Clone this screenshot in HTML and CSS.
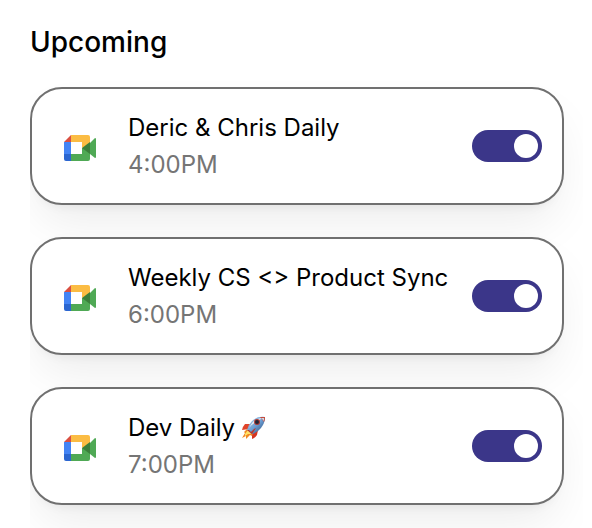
FILE: index.html
```html
<!DOCTYPE html>
<html lang="en">
<head>
<meta charset="utf-8">
<meta name="viewport" content="width=device-width, initial-scale=1">
<title>Upcoming</title>
<link rel="stylesheet" href="styles.css">
</head>
<body>
<svg class="sprite" aria-hidden="true">
  <symbol id="meet" viewBox="0 0 32 26">
    <path fill="#fbbc43" d="M7 0H24Q26 0 26 2V9L18 13V7H7Z"/>
    <path fill="#d94f41" d="M7 0V7H0Z"/>
    <path fill="#4384f5" d="M0 7H7V19H0Z"/>
    <path fill="#2b66d0" d="M0 19H7V26H2Q0 26 0 24Z"/>
    <path fill="#4fa955" d="M7 19H18V13H26V24Q26 26 24 26H7Z"/>
    <path fill="#4fa955" d="M26 8L31 3Q32 3 32 4V22Q32 23 31 23L26 19Z"/>
    <path fill="#3a7f3b" d="M26 7V19L18 13Z"/>
  </symbol>
</svg>
<main class="page">
  <h1 class="heading">Upcoming</h1>
  <ul class="meetings">
    <li class="card">
      <svg class="logo" role="img" aria-label="Google Meet"><use href="#meet"/></svg>
      <div class="details">
        <label class="title" for="m1">Deric &amp; Chris Daily</label>
        <time class="time" datetime="16:00">4:00PM</time>
      </div>
      <input class="toggle" type="checkbox" role="switch" id="m1" checked>
    </li>
    <li class="card">
      <svg class="logo" role="img" aria-label="Google Meet"><use href="#meet"/></svg>
      <div class="details">
        <label class="title" for="m2">Weekly CS &lt;&gt; Product Sync</label>
        <time class="time" datetime="18:00">6:00PM</time>
      </div>
      <input class="toggle" type="checkbox" role="switch" id="m2" checked>
    </li>
    <li class="card">
      <svg class="logo" role="img" aria-label="Google Meet"><use href="#meet"/></svg>
      <div class="details">
        <label class="title" for="m3">Dev Daily
          <svg class="rocket" viewBox="0 0 24 24" role="img" aria-label="rocket">
            <defs>
              <linearGradient id="hull" x1="0" y1="0" x2="1" y2="1">
                <stop offset="0" stop-color="#b9d5ee"/>
                <stop offset=".5" stop-color="#6d9fd4"/>
                <stop offset="1" stop-color="#24436f"/>
              </linearGradient>
            </defs>
            <path fill="#e0442a" d="M9 8L3 8Q1 10 0 14L7 13Z"/>
            <path fill="#d63421" d="M16 14L15 19Q13 22 10 23L10 17Z"/>
            <path fill="#f08a24" d="M5 13L2 16L3 17L0 22L4 20L4 23L8 19L10 20L11 17Z"/>
            <path fill="#ffe36a" d="M6 14L3 18L3 20L6 18L9 18Z"/>
            <path fill="url(#hull)" d="M23 1Q15 0 10 5Q6 9 5 14L10 18Q15 17 19 12Q23 7 23 1Z"/>
            <path fill="#e4edf4" d="M21 2Q14 2 10 7L7 12Q12 6 21 2Z"/>
            <path fill="#c94a3a" d="M23 1L18 1L22 6Q23 4 23 1Z"/>
            <path fill="#c5d7e8" d="M22 2L19 2L22 5Z"/>
            <path fill="#bd3429" d="M5 14L10 18L14 12L12 13L9 16L7 14Z"/>
            <circle cx="15" cy="6" r="3" fill="#b43a31"/>
            <circle cx="15" cy="6" r="2" fill="#20283a"/>
          </svg>
        </label>
        <time class="time" datetime="19:00">7:00PM</time>
      </div>
      <input class="toggle" type="checkbox" role="switch" id="m3" checked>
    </li>
  </ul>
</main>
</body>
</html>
```
FILE: styles.css
```css
* {
  box-sizing: border-box;
}

body {
  margin: 0;
  background: #fff;
  color: #000;
  font-family: Inter, "Liberation Sans", sans-serif;
}

.sprite {
  position: absolute;
  width: 0;
  height: 0;
}

.page {
  padding: 24px 9px 0 30px;
}

.heading {
  margin: 0;
  font-size: 28px;
  line-height: 36px;
  font-weight: 500;
}

.meetings {
  display: flex;
  flex-direction: column;
  gap: 32px;
  margin: 0;
  padding: 27px 19px 23px 0;
  list-style: none;
  overflow: hidden;
}

.card {
  display: flex;
  align-items: center;
  gap: 32px;
  padding: 20px 20px 20px 32px;
  border: 2px solid #707070;
  border-radius: 32px;
  background: #fff;
  box-shadow: 0 8px 12px -8px rgba(0, 0, 0, 0.08), 0 24px 48px -8px rgba(0, 0, 0, 0.08);
}

.logo {
  flex: none;
  width: 32px;
  height: 26px;
  margin-top: 4px;
}

.details {
  display: flex;
  flex: 1;
  flex-direction: column;
  min-width: 0;
  font-size: 24px;
  line-height: 37px;
}

.title {
  white-space: nowrap;
}

.time {
  color: #757575;
}

.rocket {
  width: 24px;
  height: 24px;
  vertical-align: -4px;
}

.toggle {
  display: flex;
  flex: none;
  align-items: center;
  justify-content: flex-end;
  width: 70px;
  height: 32px;
  margin: 0;
  padding: 4px;
  border-radius: 16px;
  background: #3b3689;
  appearance: none;
  cursor: pointer;
}

.toggle::before {
  width: 24px;
  height: 24px;
  border-radius: 50%;
  background: #fff;
  content: "";
}

.toggle:not(:checked) {
  justify-content: flex-start;
  background: #a3a3a3;
}
```
